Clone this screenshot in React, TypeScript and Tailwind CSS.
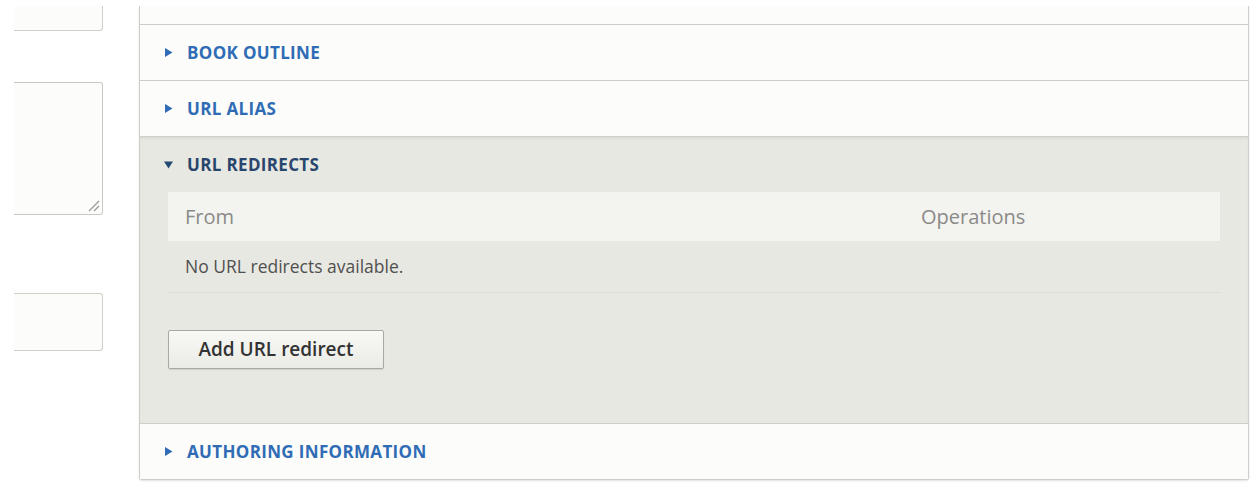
import type { ReactNode } from 'react';

const fontStack = { fontFamily: '"Open Sans", "Liberation Sans", sans-serif' };

function Caret({ open = false, dark = false }: { open?: boolean; dark?: boolean }) {
  const fill = dark ? '#244a73' : '#2f6cb5';
  return (
    <svg width="9" height="9" viewBox="0 0 9 9" className="shrink-0">
      {open ? <polygon points="0,1.5 9,1.5 4.5,8.5" fill={fill} /> : <polygon points="1,0 8.5,4.5 1,9" fill={fill} />}
    </svg>
  );
}

function Summary({ label, open = false }: { label: string; open?: boolean }) {
  return (
    <div className="flex h-[55px] items-center gap-[14px] pl-[24px]">
      <Caret open={open} dark={open} />
      <span className={`text-[17px] font-bold uppercase tracking-[0.02em] ${open ? 'text-[#28466d]' : 'text-[#2f6cb5]'}`}>
        {label}
      </span>
    </div>
  );
}

function Section({ children, open = false }: { children: ReactNode; open?: boolean }) {
  return (
    <div className={`border-t border-[#cfcfca] ${open ? 'bg-[#e8e8e2] shadow-[inset_0_2px_2px_rgba(0,0,0,0.05)]' : 'bg-[#fcfcfa]'}`}>
      {children}
    </div>
  );
}

export default function App() {
  return (
    <div className="flex min-h-[490px] bg-white pt-[6px]" style={fontStack}>
      {/* left form column, cut off by the crop */}
      <div className="flex w-[103px] shrink-0 flex-col pl-[14px]">
        <div className="h-[25px] rounded-br-[3px] border-r border-b border-[#cfcfca] bg-[#fcfcfa]" />
        <div className="relative mt-[51px] h-[133px] rounded-r-[3px] border border-l-0 border-[#c8c8c4] bg-[#fcfcfa]">
          <svg width="12" height="12" viewBox="0 0 12 12" className="absolute right-[2px] bottom-[2px]">
            <line x1="1" y1="11" x2="11" y2="1" stroke="#9a9a9a" strokeWidth="1.2" />
            <line x1="6" y1="11" x2="11" y2="6" stroke="#9a9a9a" strokeWidth="1.2" />
          </svg>
        </div>
        <div className="mt-[78px] h-[58px] rounded-r-[3px] border border-l-0 border-[#cfcfca] bg-[#fcfcfa]" />
      </div>

      {/* vertical tabs / details panel */}
      <div className="ml-[36px] mb-[11px] w-[1110px] self-start rounded-b-[3px] border-x border-b border-[#cfcfca] bg-[#fcfcfa] shadow-[0_1px_2px_rgba(0,0,0,0.12)]">
        <div className="h-[18px]" />
        <Section>
          <Summary label="Book outline" />
        </Section>
        <Section>
          <Summary label="URL alias" />
        </Section>
        <Section open>
          <Summary label="URL redirects" open />
          <div className="px-[28px] pb-[54px]">
            <div className="flex h-[49px] items-center bg-[#f3f3ef] text-[20px] text-[#8a8a88]">
              <div className="w-[736px] pl-[17px]">From</div>
              <div className="flex-1 pl-[17px]">Operations</div>
            </div>
            <div className="flex h-[52px] items-center border-b border-[#dcdcd6] pl-[17px] text-[17.5px] text-[#505050]">
              No URL redirects available.
            </div>
            <button
              type="button"
              className="mt-[37px] h-[39px] w-[216px] rounded-[2px] border border-[#a8a8a4] bg-gradient-to-b from-[#f8f8f5] to-[#ebebe6] text-[19px] font-semibold text-[#333] shadow-[0_1px_1px_rgba(0,0,0,0.1)]"
            >
              Add URL redirect
            </button>
          </div>
        </Section>
        <Section>
          <Summary label="Authoring information" />
        </Section>
      </div>
    </div>
  );
}
